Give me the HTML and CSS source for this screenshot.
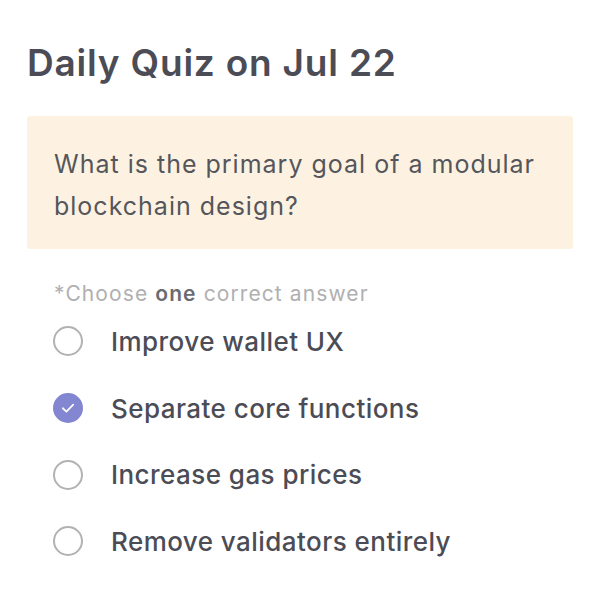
FILE: index.html
```html
<!DOCTYPE html>
<html lang="en">
<head>
    <meta charset="UTF-8">
    <meta name="viewport" content="width=device-width, initial-scale=1.0">
    <title>Daily Quiz</title>
    <link rel="stylesheet" href="styles.css">
</head>
<body>

    <div class="quiz">
        <h1>Daily Quiz on Jul 22</h1>

        <div class="question">
            What is the primary goal of a modular blockchain design?
        </div>

        <p class="hint">*Choose <b>one</b> correct answer</p>

        <ul class="answers">
            <li class="answer">
                <span class="radio"></span>
                Improve wallet UX
            </li>
            <li class="answer checked">
                <span class="radio">
                    <svg viewBox="0 0 30 30" width="30" height="30">
                        <path d="M9 15.3 L13.2 19.2 L21 11.2" fill="none" stroke="#fff" stroke-width="2" stroke-linecap="round" stroke-linejoin="round"/>
                    </svg>
                </span>
                Separate core functions
            </li>
            <li class="answer">
                <span class="radio"></span>
                Increase gas prices
            </li>
            <li class="answer">
                <span class="radio"></span>
                Remove validators entirely
            </li>
        </ul>
    </div>

</body>
</html>
```

FILE: styles.css
```css
body {
    margin: 0;
    font-family: Inter, "Noto Sans", sans-serif;
    background: #fff;
}

.quiz {
    padding: 38px 27px 0 27px;
}

h1 {
    margin: 0 0 28px 0;
    font-size: 37px;
    font-weight: 600;
    line-height: 50px;
    color: #4b4c55;
    letter-spacing: 0.8px;
}

.question {
    background-color: #fdf2e1;
    border-radius: 3px;
    padding: 27px 27px 22px 27px;
    font-size: 25px;
    line-height: 42px;
    color: #55565c;
    letter-spacing: 1px;
}

.hint {
    margin: 31px 0 0 27px;
    font-size: 21px;
    line-height: 28px;
    color: #b0b0b2;
    letter-spacing: 1.1px;
}

.hint b {
    color: #6a6b70;
    font-weight: 600;
}

.answers {
    list-style: none;
    margin: 0 0 0 26px;
    padding: 0;
}

.answer {
    display: flex;
    align-items: center;
    gap: 28px;
    height: 66.7px;
    font-size: 26px;
    font-weight: 500;
    color: #4b4c55;
    letter-spacing: 0.45px;
}

.radio {
    width: 26px;
    height: 26px;
    border: 2px solid #b2b2b2;
    border-radius: 50%;
    flex-shrink: 0;
    display: flex;
    align-items: center;
    justify-content: center;
}

.answer.checked .radio {
    background-color: #8386d0;
    border-color: #8386d0;
}

.answer.checked svg {
    width: 30px;
    height: 30px;
}
```
